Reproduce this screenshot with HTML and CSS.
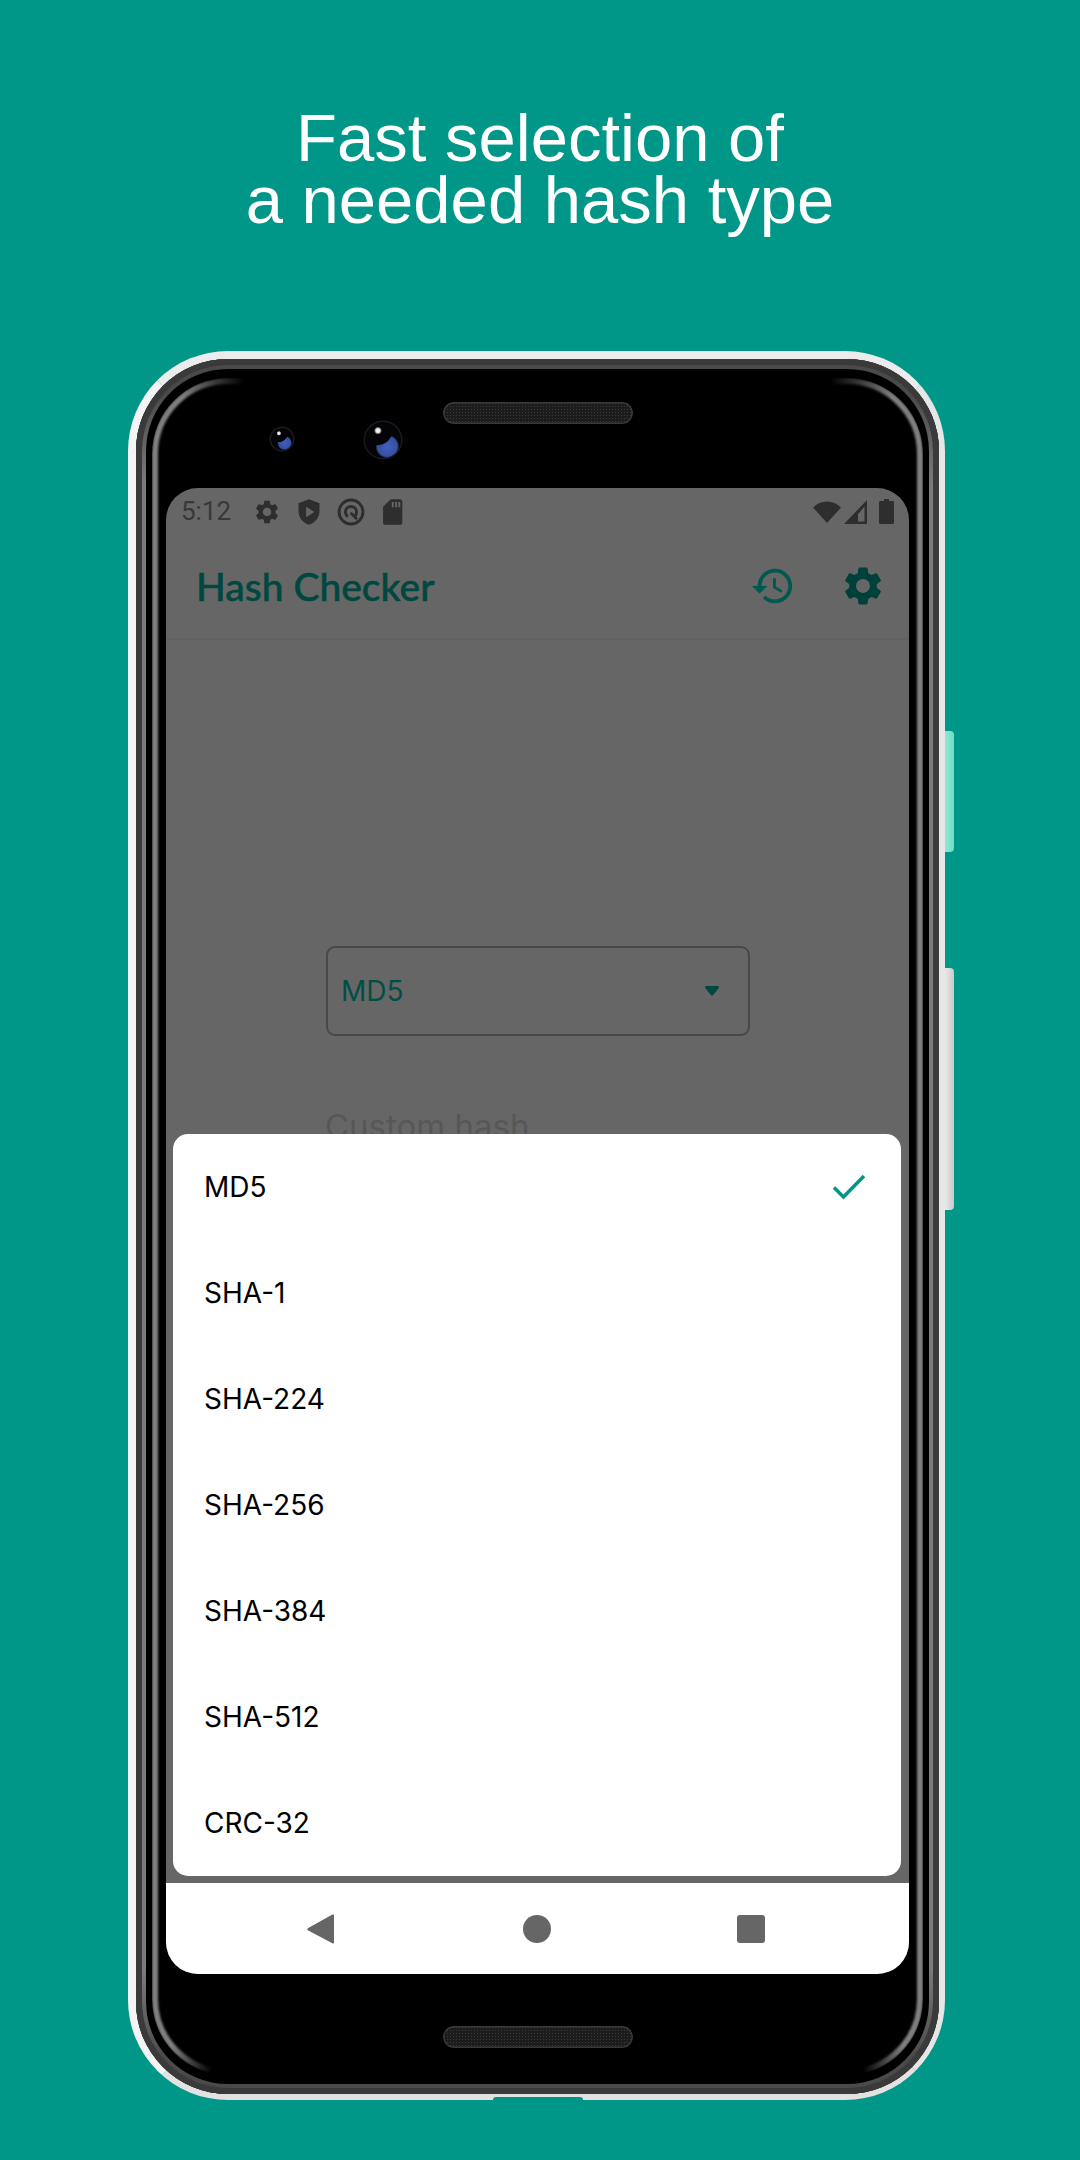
FILE: index.html
```html
<!DOCTYPE html>
<html lang="en">

<head>
	<meta charset="UTF-8">
	<meta name="viewport" content="width=device-width, initial-scale=1.0">
	<title>Hash Checker</title>
	<link rel="stylesheet" href="styles.css">
</head>

<body>
	<h1 class="headline">Fast selection of<br>a needed hash type</h1>

	<div class="phone">
		<span class="btn-power"></span>
		<span class="btn-volume"></span>
		<span class="notch"></span>

		<div class="bezel">
			<!-- Top of the phone -->
			<div class="top-glass">
				<span class="cam cam-small"></span>
				<span class="cam cam-big"></span>
				<span class="speaker"></span>
			</div>

			<div class="screen">
				<!-- Status bar -->
				<div class="status">
					<span class="time">5:12</span>
					<svg class="st-icon" viewBox="0 0 24 24"><path d="M19.14 12.94c.04-.3.06-.61.06-.94 0-.32-.02-.64-.07-.94l2.03-1.58c.18-.14.23-.41.12-.61l-1.92-3.32c-.12-.22-.37-.29-.59-.22l-2.39.96c-.5-.38-1.03-.7-1.62-.94l-.36-2.54c-.04-.24-.24-.41-.48-.41h-3.84c-.24 0-.43.17-.47.41l-.36 2.54c-.59.24-1.13.57-1.62.94l-2.39-.96c-.22-.08-.47 0-.59.22L2.74 8.87c-.12.21-.08.47.12.61l2.03 1.58c-.05.3-.09.63-.09.94s.02.64.07.94l-2.03 1.58c-.18.14-.23.41-.12.61l1.92 3.32c.12.22.37.29.59.22l2.39-.96c.5.38 1.03.7 1.62.94l.36 2.54c.05.24.24.41.48.41h3.84c.24 0 .44-.17.47-.41l.36-2.54c.59-.24 1.13-.56 1.62-.94l2.39.96c.22.08.47 0 .59-.22l1.92-3.32c.12-.22.07-.47-.12-.61l-2.01-1.58zM12 15.6c-1.98 0-3.6-1.62-3.6-3.6s1.62-3.6 3.6-3.6 3.6 1.62 3.6 3.6-1.62 3.6-3.6 3.6z"/></svg>
					<svg class="st-icon" viewBox="0 0 24 24"><path fill-rule="evenodd" d="M12 1L3 4.6v6.6c0 5.4 3.8 10.4 9 11.8 5.2-1.400 9-6.400 9-11.800V4.600zM9.500 7.500l7 4.500-7 4.500z"/></svg>
					<svg class="st-icon" viewBox="0 0 24 24"><path fill-rule="evenodd" d="M12 0.500a11.500 11.500 0 1 0 0 23 11.500 11.500 0 0 0 0-23zm0 2.500a9 9 0 1 1 0 18 9 9 0 0 1 0-18z"/><path d="M12 6a6 6 0 0 0-6 6c0 2 1 3.800 2.500 4.900l1.700-1.900C9 14.300 8.500 13.200 8.500 12a3.500 3.500 0 0 1 7 0c0 .8-.3 1.500-.7 2.100l-2.300-2.300-1.700 1.700 5.500 5.500 1.700-1.700-1.300-1.300c.9-1.100 1.300-2.500 1.300-4A6 6 0 0 0 12 6z"/></svg>
					<svg class="st-icon" viewBox="0 0 24 24"><path fill-rule="evenodd" d="M18 1h-8L3.500 7.500V21c0 1.100.9 2 2 2h12.500c1.100 0 2-.9 2-2V3c0-1.100-.9-2-2-2zM11 3.500h1.600v4.500H11zm2.900 0h1.600v4.500h-1.600zm2.700 0h1.600v4.500h-1.600z"/></svg>

					<span class="status-right">
						<svg class="wifi" viewBox="0 0 28 24"><path d="M14 23L0 7.500C3.800 3.600 8.700 1.500 14 1.500s10.200 2.100 14 6z"/></svg>
						<svg class="signal" viewBox="0 0 24 24"><path fill-rule="evenodd" d="M23 0v24H0zM20.500 6.500L14 14.300v7.200h6.500z"/></svg>
						<svg class="battery" viewBox="0 0 15 25"><path d="M5 0h5v2h3.500c.8 0 1.500.7 1.500 1.500V23.500c0 .8-.7 1.500-1.500 1.500h-12C.7 25 0 24.300 0 23.500V3.500C0 2.700.7 2 1.500 2H5z"/></svg>
					</span>
				</div>

				<!-- App bar -->
				<div class="appbar">
					<span class="app-title">Hash Checker</span>
					<svg class="bar-icon" viewBox="0 0 24 24"><path d="M13 3c-4.970 0-9 4.030-9 9H1l3.890 3.890.07.140L9 12H6c0-3.870 3.130-7 7-7s7 3.130 7 7-3.130 7-7 7c-1.930 0-3.680-.79-4.940-2.060l-1.420 1.420C8.270 19.990 10.510 21 13 21c4.970 0 9-4.030 9-9s-4.030-9-9-9zm-1 5v5l4.280 2.540.72-1.210-3.500-2.080V8H12z"/></svg>
					<svg class="bar-icon bar-gear" viewBox="0 0 24 24"><path d="M19.14 12.94c.04-.3.06-.61.06-.94 0-.32-.02-.64-.07-.94l2.03-1.58c.18-.14.23-.41.12-.61l-1.92-3.32c-.12-.22-.37-.29-.59-.22l-2.39.96c-.5-.38-1.03-.7-1.62-.94l-.36-2.54c-.04-.24-.24-.41-.48-.41h-3.84c-.24 0-.43.17-.47.41l-.36 2.54c-.59.24-1.13.57-1.62.94l-2.39-.96c-.22-.08-.47 0-.59.22L2.74 8.87c-.12.21-.08.47.12.61l2.03 1.58c-.05.3-.09.63-.09.94s.02.64.07.94l-2.03 1.58c-.18.14-.23.41-.12.61l1.92 3.32c.12.22.37.29.59.22l2.39-.96c.5.38 1.03.7 1.62.94l.36 2.54c.05.24.24.41.48.41h3.84c.24 0 .44-.17.47-.41l.36-2.54c.59-.24 1.13-.56 1.62-.94l2.39.96c.22.08.47 0 .59-.22l1.92-3.32c.12-.22.07-.47-.12-.61l-2.01-1.58zM12 15.6c-1.98 0-3.6-1.62-3.6-3.6s1.62-3.6 3.6-3.6 3.6 1.62 3.6 3.6-1.62 3.6-3.6 3.6z"/></svg>
				</div>

				<!-- Contenido -->
				<div class="content">
					<div class="picker">
						<span class="picker-value">MD5</span>
						<svg class="picker-arrow" viewBox="0 0 14 10"><path d="M1.500 0h11c1.200 0 1.800 1.300 1 2.200L8 9.300c-.5.600-1.500.600-2 0L.5 2.200C-.3 1.300.3 0 1.500 0z"/></svg>
					</div>
					<div class="custom">Custom hash</div>

					<!-- Lista de hashes -->
					<ul class="sheet">
						<li class="sheet-item">MD5
							<svg class="check" viewBox="0 0 34 26"><path d="M2 13.500L11.500 23 32 2"/></svg>
						</li>
						<li class="sheet-item">SHA-1</li>
						<li class="sheet-item">SHA-224</li>
						<li class="sheet-item">SHA-256</li>
						<li class="sheet-item">SHA-384</li>
						<li class="sheet-item">SHA-512</li>
						<li class="sheet-item">CRC-32</li>
					</ul>
				</div>

				<!-- Nav bar -->
				<div class="navbar">
					<svg class="nav-back" viewBox="0 0 27 30"><path d="M26 0.500c.6 0 1 .4 1 1v27c0 .9-1 1.300-1.700.8L.8 16.200c-.6-.4-.6-1.600 0-2L25 .8z"/></svg>
					<span class="nav-home"></span>
					<span class="nav-recent"></span>
				</div>
			</div>

			<div class="bottom-glass">
				<span class="speaker"></span>
			</div>
		</div>
	</div>
</body>

</html>
```

FILE: styles.css
```css
* {
	box-sizing: border-box;
}

html,
body {
	margin: 0;
	height: 2160px;
	overflow: hidden;
}

body {
	background-color: #009688;
	font-family: Inter, Roboto, "Liberation Sans", sans-serif;
}

.headline {
	margin: 0;
	padding-top: 107px;
	font-family: "Liberation Sans", Arial, sans-serif;
	font-size: 67px;
	font-weight: 400;
	line-height: 62px;
	text-align: center;
	color: #fff;
}

/* Phone */
.phone {
	position: relative;
	width: 817px;
	height: 1749px;
	margin: 120px 0 0 128px;
	border-style: solid;
	border-width: 8px 6px 6px 8px;
	border-color: #ececec #e6e6e6 #e2e2e2 #f4f4f4;
	border-radius: 100px;
}

.btn-power,
.btn-volume {
	position: absolute;
	right: -15px;
	width: 9px;
	border-radius: 0 4px 4px 0;
}

.btn-power {
	top: 372px;
	height: 121px;
	background: linear-gradient(to right, #8fead5, #6fdcc4);
}

.btn-volume {
	top: 609px;
	height: 242px;
	background: linear-gradient(to right, #e8e8e8, #c9c9c9);
}

.notch {
	position: absolute;
	left: 357px;
	bottom: -6px;
	width: 90px;
	height: 3px;
	border-radius: 3px 3px 0 0;
	background-color: #009688;
}

.bezel {
	position: relative;
	display: flex;
	flex-direction: column;
	height: 100%;
	padding: 0 30px;
	border-radius: 92px;
	background-color: #000;
	box-shadow:
		inset 0 0 0 6px #3a3a3a,
		inset 0 0 0 10px #4a4a4a;
}

/* highlight that runs down both sides and fades at the corners */
.bezel::before {
	content: "";
	position: absolute;
	top: 19px;
	bottom: 19px;
	left: 16px;
	right: 16px;
	border: 6px solid #808080;
	border-radius: 76px;
	filter: blur(1px);
	-webkit-mask-image:
		linear-gradient(to right, #000 30px, transparent 92px, transparent calc(100% - 92px), #000 calc(100% - 30px)),
		linear-gradient(to right, #000 20px, transparent 60px, transparent calc(100% - 60px), #000 calc(100% - 20px));
	mask-image:
		linear-gradient(to right, #000 30px, transparent 92px, transparent calc(100% - 92px), #000 calc(100% - 30px)),
		linear-gradient(to right, #000 20px, transparent 60px, transparent calc(100% - 60px), #000 calc(100% - 20px));
	-webkit-mask-size: 100% 51%;
	mask-size: 100% 51%;
	-webkit-mask-position: top, bottom;
	mask-position: top, bottom;
	-webkit-mask-repeat: no-repeat;
	mask-repeat: no-repeat;
}

/* lighter stripe of the metal edge, only on the long sides */
.bezel::after {
	content: "";
	position: absolute;
	inset: 6px;
	border: 4px solid #7c7c7c;
	border-radius: 86px;
	-webkit-mask-image: linear-gradient(to bottom, transparent 30px, #000 120px, #000 calc(100% - 120px), transparent calc(100% - 30px));
	mask-image: linear-gradient(to bottom, transparent 30px, #000 120px, #000 calc(100% - 120px), transparent calc(100% - 30px));
}

.top-glass {
	position: relative;
	display: flex;
	align-items: center;
	flex: 0 0 129px;
}

.bottom-glass {
	position: relative;
	flex: 1;
	display: flex;
	justify-content: center;
	padding-top: 52px;
}

.cam {
	position: absolute;
	border-radius: 50%;
	box-shadow: 0 0 0 1.500px #1a1a20;
	background:
		radial-gradient(circle at 36% 24%, #fff 0, #ddd 6%, transparent 11%),
		radial-gradient(circle at 34% 22%, #040406 40%, transparent 43%),
		radial-gradient(circle at 62% 68%, #3f5fc0 0, #35509f 30%, transparent 36%),
		#040406;
}

.cam-small {
	left: 105px;
	top: 69px;
	width: 22px;
	height: 22px;
}

.cam-big {
	left: 199px;
	top: 63px;
	width: 36px;
	height: 36px;
}

.speaker {
	display: block;
	width: 190px;
	height: 22px;
	border-radius: 11px;
	background-color: #1c1c1c;
	background-image: radial-gradient(#3a3a3a 0.6px, transparent 0.8px);
	background-size: 3px 3px;
	box-shadow: inset 0 0 0 1.500px #3a3a3a;
}

.top-glass .speaker {
	position: absolute;
	left: 277px;
	top: 43px;
}

/* Screen */
.screen {
	position: relative;
	display: flex;
	flex-direction: column;
	flex: 0 0 1486px;
	border-radius: 32px;
	overflow: hidden;
	background-color: #666;
}

.status {
	display: flex;
	align-items: center;
	flex: 0 0 47px;
	padding: 0 15px;
	color: #333;
}

.time {
	width: 72px;
	font-family: Roboto, sans-serif;
	font-size: 26px;
	line-height: 47px;
	color: #383838;
}

.st-icon {
	width: 28px;
	height: 28px;
	margin-right: 14px;
	fill: #2e2e2e;
}

.status-right {
	display: flex;
	align-items: center;
	gap: 3px;
	margin-left: auto;
}

.status-right svg {
	fill: #2e2e2e;
}

.wifi {
	width: 28px;
	height: 24px;
}

.signal {
	width: 24px;
	height: 24px;
}

.battery {
	width: 15px;
	height: 25px;
	margin-left: 8px;
}

.appbar {
	display: flex;
	align-items: center;
	flex: 0 0 105px;
	padding: 0 23px 2px 30px;
	border-bottom: 2px solid #626262;
}

.app-title {
	flex: 1;
	font-family: Lato, Roboto, sans-serif;
	font-size: 39px;
	font-weight: 500;
	line-height: 44px;
	color: #00483f;
	-webkit-text-stroke: 0.5px #00483f;
}

.bar-icon {
	width: 46px;
	height: 46px;
	fill: #00584f;
}

.bar-gear {
	margin-left: 44px;
	fill: #00403a;
}

.content {
	position: relative;
	flex: 1;
	padding: 306px 0 0 160px;
	overflow: hidden;
}

.picker {
	display: flex;
	align-items: center;
	justify-content: space-between;
	width: 424px;
	height: 90px;
	padding: 0 29px 0 13px;
	border: 2px solid #484848;
	border-radius: 9px;
}

.picker-value {
	font-size: 28px;
	color: #004f46;
}

.picker-arrow {
	width: 14px;
	height: 10px;
	fill: #00483f;
}

.custom {
	margin-top: 71px;
	margin-left: -1px;
	font-size: 33px;
	line-height: 38px;
	color: #575757;
}

.sheet {
	position: absolute;
	left: 7px;
	right: 8px;
	bottom: 7px;
	height: 742px;
	margin: 0;
	padding: 0;
	list-style: none;
	border-radius: 15px;
	background-color: #fff;
}

.sheet-item {
	display: flex;
	align-items: center;
	justify-content: space-between;
	height: 106px;
	padding: 0 35px 0 31px;
	font-size: 28px;
	color: #000;
}

.check {
	width: 34px;
	height: 26px;
	fill: none;
	stroke: #009688;
	stroke-width: 3.500;
}

.navbar {
	display: flex;
	align-items: center;
	justify-content: center;
	flex: 0 0 91px;
	padding-right: 3px;
	background-color: #fff;
	color: #666;
}

.nav-back {
	width: 27px;
	height: 30px;
	fill: #666;
}

.nav-home {
	width: 28px;
	height: 28px;
	margin-left: 189px;
	border-radius: 50%;
	background-color: #666;
}

.nav-recent {
	width: 28px;
	height: 28px;
	margin-left: 186px;
	border-radius: 3px;
	background-color: #666;
}
```
